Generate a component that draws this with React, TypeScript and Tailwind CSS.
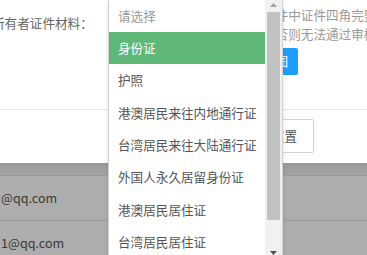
const options = [
  "请选择",
  "身份证",
  "护照",
  "港澳居民来往内地通行证",
  "台湾居民来往大陆通行证",
  "外国人永久居留身份证",
  "港澳居民居住证",
  "台湾居民居住证",
];

const rows = ["@qq.com", "1@qq.com"];

const SelectMenu = () => {
  return (
    <div className="absolute left-[108px] top-0 h-[262px] w-[175px] flex border-x border-[#d2d2d2] bg-white shadow-[0_2px_4px_rgba(0,0,0,0.12)]">
      <ul className="flex-1 mt-[-0.4px]">
        {options.map((o, i) => (
          <li
            key={o}
            className={
              "h-[32.4px] flex items-center pl-[9px] text-[12.6px] leading-none whitespace-nowrap " +
              (i === 0
                ? "text-[#999]"
                : i === 1
                ? "bg-[#5fb878] text-white"
                : "text-[#555]")
            }
          >
            {o}
          </li>
        ))}
      </ul>
      {/* fake scrollbar */}
      <div className="w-[17px] bg-[#f1f1f1] flex flex-col items-center">
        <svg width="7" height="4" viewBox="0 0 7 4" className="mt-[3px]">
          <polygon points="0,4 7,4 3.5,0" fill="#a3a3a3" />
        </svg>
        <div className="mt-[5px] h-[208px] w-[13px] bg-[#c1c1c1]" />
        <svg width="7" height="4" viewBox="0 0 7 4" className="mt-[31px]">
          <polygon points="0,0 7,0 3.5,4" fill="#505050" />
        </svg>
      </div>
    </div>
  );
};

export default function App() {
  return (
    <div className="relative w-[367px] h-[255px] overflow-hidden bg-white font-['Noto_Sans_CJK_SC',sans-serif]">
      {/* form row */}
      <div className="h-[109px] flex">
        <div className="w-[236px] ml-[-8px] pt-[8.5px] shrink-0">
          <span className="text-[12.6px] leading-[19px] text-[#666] whitespace-nowrap">所有者证件材料：</span>
        </div>
        <div className="flex-1 min-w-0 pt-[4.5px]">
          <p className="pl-[47.6px] text-[12.6px] leading-[19px] text-[#999] whitespace-nowrap">件中证件四角完整清晰</p>
          <p className="pl-[47.6px] text-[12.6px] leading-[19px] text-[#999] whitespace-nowrap">否则无法通过审核</p>
          <button className="mt-[5px] h-[27px] w-[70px] pr-[10px] flex items-center justify-end rounded-[2px] bg-[#1e9fff] text-white text-[12.6px] leading-none whitespace-nowrap">
            上传图
          </button>
        </div>
      </div>
      <div className="border-t border-[#e6e6e6] h-[54px] flex justify-end pt-[9px] pr-[53px]">
        <button className="h-[34px] px-[16px] border border-[#d2d2d2] rounded-[2px] bg-white text-[#555] text-[12.6px] leading-none whitespace-nowrap">
          重置
        </button>
      </div>
      {/* table under shade */}
      <div className="h-[13px] bg-gradient-to-b from-[#999] to-[#a3a3a3] border-b border-[#9a9a9a]" />
      {rows.map((r) => (
        <div key={r} className="h-[45px] flex items-center bg-[#adadad] border-b border-[#9c9c9c]">
          <span className="ml-[1px] text-[12.6px] leading-none text-[#3a3a3a]">{r}</span>
        </div>
      ))}
      <SelectMenu />
    </div>
  );
}
